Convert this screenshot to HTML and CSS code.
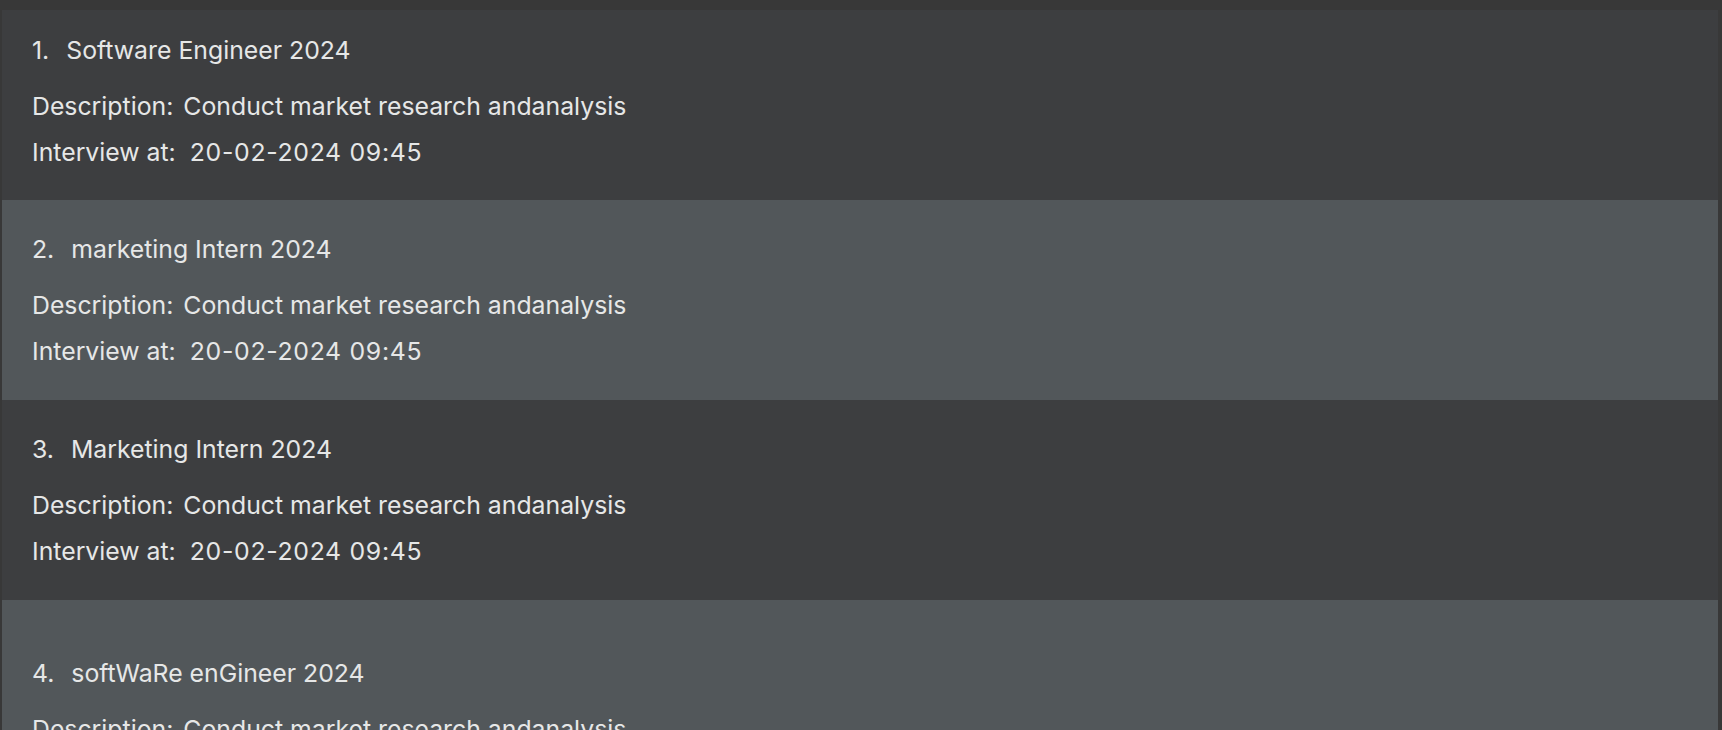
FILE: index.html
```html
<!DOCTYPE html>
<html lang="en">
<head>
<meta charset="utf-8">
<title>Interviews</title>
<link rel="stylesheet" href="styles.css">
</head>
<body>
<div class="list">
  <div class="card dark first">
    <div class="title"><span class="num">1.</span><span>Software Engineer 2024</span></div>
    <div class="field"><span class="label desc">Description:</span><span>Conduct market research andanalysis</span></div>
    <div class="field"><span class="label when">Interview at:</span><span class="date">20-02-2024 09:45</span></div>
  </div>
  <div class="card light">
    <div class="title"><span class="num">2.</span><span>marketing Intern 2024</span></div>
    <div class="field"><span class="label desc">Description:</span><span>Conduct market research andanalysis</span></div>
    <div class="field"><span class="label when">Interview at:</span><span class="date">20-02-2024 09:45</span></div>
  </div>
  <div class="card dark">
    <div class="title"><span class="num">3.</span><span>Marketing Intern 2024</span></div>
    <div class="field"><span class="label desc">Description:</span><span>Conduct market research andanalysis</span></div>
    <div class="field"><span class="label when">Interview at:</span><span class="date">20-02-2024 09:45</span></div>
  </div>
  <div class="card light tall">
    <div class="title"><span class="num">4.</span><span>softWaRe enGineer 2024</span></div>
    <div class="field"><span class="label desc">Description:</span><span>Conduct market research andanalysis</span></div>
    <div class="field"><span class="label when">Interview at:</span><span class="date">20-02-2024 09:45</span></div>
  </div>
</div>
</body>
</html>
```
FILE: styles.css
```css
html, body {
  margin: 0;
  padding: 0;
  background: #383838;
  height: 100%;
  overflow: hidden;
}
body {
  font-family: Inter, "Noto Sans", sans-serif;
  font-size: 24.8px;
  color: #e6e7e7;
}
.list {
  display: flex;
  flex-direction: column;
  padding: 10px 4px 0 2px;
}
.card {
  display: flex;
  flex-direction: column;
  gap: 16px;
  height: 200px;
  box-sizing: border-box;
  padding: 34px 0 0 30px;
  flex-shrink: 0;
}
.card.first {
  height: 190px;
  padding-top: 25px;
}
.card.tall {
  padding-top: 58px;
}
.dark {
  background: #3d3e40;
}
.light {
  background: #52575a;
}
.title, .field {
  display: flex;
  line-height: 30px;
  white-space: nowrap;
}
.title {
  margin-bottom: 10px;
}
.num {
  margin-right: 17px;
}
.label.desc {
  margin-right: 10px;
}
.label.when {
  margin-right: 14px;
}
.date {
  letter-spacing: 0.7px;
}
```
